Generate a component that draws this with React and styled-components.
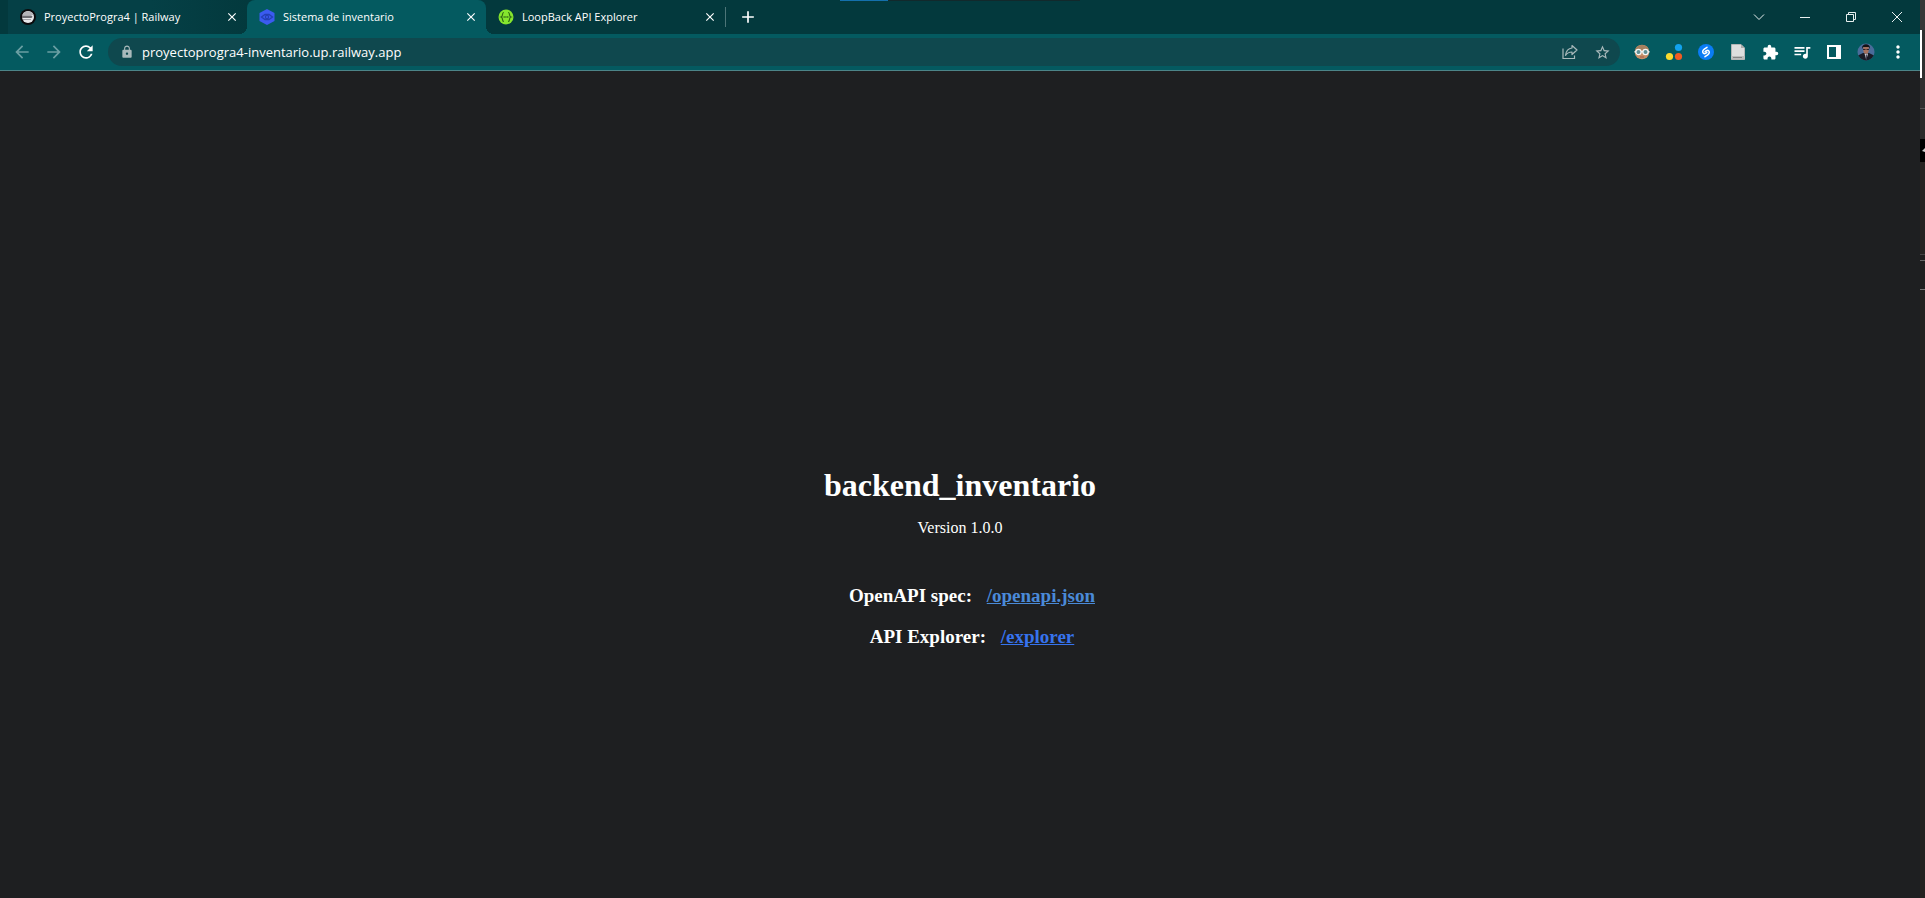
import React from "react";
import styled, { createGlobalStyle, css } from "styled-components";
import {
  MdAdd,
  MdArrowBack,
  MdArrowForward,
  MdClose,
  MdExtension,
  MdLock,
  MdMoreVert,
  MdQueueMusic,
  MdRefresh,
  MdStarBorder,
} from "react-icons/md";

const color = {
  strip: "#03393d",
  idleTab: "#054046",
  toolbar: "#045a60",
  field: "#0f484e",
  page: "#1e1f21",
  muted: "#6a9fa3",
  soft: "#a9b9bb",
};

const GlobalStyle = createGlobalStyle`
  * { box-sizing: border-box; }
  html, body, #root { height: 100%; }
  body { margin: 0; background: ${color.page}; color: #fff; overflow: hidden; }
  button { border: 0; padding: 0; background: none; color: inherit; font: inherit; }
`;

const Desktop = styled.div`
  display: flex;
  height: 100%;
`;

const Browser = styled.div`
  position: relative;
  flex: 1;
  min-width: 0;
  display: flex;
  flex-direction: column;
  font-family: "Open Sans", "Noto Sans", sans-serif;
`;

const TopEdge = styled.div`
  position: absolute;
  top: 0;
  left: 840px;
  width: 240px;
  height: 1px;
  background: linear-gradient(90deg, #1470ac 20%, #12292c 20%);
`;

const TabStrip = styled.header`
  display: flex;
  align-items: center;
  height: 34px;
  padding-left: 8px;
  background: ${color.strip};
`;

const TabList = styled.div`
  display: flex;
  height: 100%;
`;

const activeTab = css`
  background: ${color.toolbar};
  border-radius: 8px 8px 0 0;
  &::before,
  &::after {
    content: "";
    position: absolute;
    bottom: 0;
    width: 8px;
    height: 8px;
  }
  &::before {
    right: 100%;
    background: radial-gradient(circle at 0 0, transparent 8px, ${color.toolbar} 8px);
  }
  &::after {
    left: 100%;
    background: radial-gradient(circle at 100% 0, transparent 8px, ${color.toolbar} 8px);
  }
`;

const Tab = styled.div`
  position: relative;
  display: flex;
  align-items: center;
  width: 239px;
  padding: 0 7px 0 12px;
  background: ${(p) =>
    p.$tinted ? `linear-gradient(90deg, ${color.idleTab} 60%, ${color.strip})` : "transparent"};
  ${(p) => p.$active && activeTab}
`;

const TabLabel = styled.button`
  display: flex;
  align-items: center;
  flex: 1;
  gap: 8px;
  height: 100%;
  font-size: 11px;
  line-height: 16px;
  text-align: left;
  white-space: nowrap;
  svg { flex: none; }
`;

const CloseTab = styled.button`
  display: grid;
  place-items: center;
  width: 16px;
  height: 16px;
  font-size: 14px;
`;

const TabDivider = styled.span`
  width: 1px;
  height: 20px;
  background: #4d7578;
`;

const NewTab = styled.button`
  display: grid;
  place-items: center;
  width: 28px;
  height: 28px;
  margin-left: 8px;
  font-size: 20px;
`;

const WindowControls = styled.div`
  display: flex;
  margin-left: auto;
  height: 28px;
`;

const WindowButton = styled.button`
  display: grid;
  place-items: center;
  width: 46px;
  svg { fill: none; stroke: #e8f0f0; }
`;

const Toolbar = styled.nav`
  display: flex;
  align-items: center;
  height: 37px;
  padding: 0 6px;
  background: ${color.toolbar};
  border-bottom: 1px solid #4c8488;
`;

const ToolButton = styled.button`
  display: grid;
  place-items: center;
  flex: none;
  width: 32px;
  height: 28px;
  font-size: ${(p) => p.$size || 20}px;
  color: ${(p) => p.$tone || "#fff"};
`;

const AddressBar = styled.form`
  display: flex;
  align-items: center;
  flex: 1;
  height: 28px;
  margin: 0 6px;
  padding: 0 2px 0 12px;
  border-radius: 14px;
  background: ${color.field};
  color: ${color.soft};
`;

const Address = styled.input`
  flex: 1;
  min-width: 0;
  margin-left: 8px;
  padding: 0;
  border: 0;
  outline: 0;
  background: none;
  color: #fff;
  font: 13px/20px "Open Sans", "Noto Sans", sans-serif;
`;

const Page = styled.main`
  flex: 1;
  padding-top: 396px;
  background: ${color.page};
  font-family: "Liberation Serif", "Times New Roman", serif;
  text-align: center;
`;

const Title = styled.h1`
  margin: 0 0 15px;
  font-size: 32px;
  line-height: 36px;
`;

const Version = styled.p`
  margin: 0 0 47px;
  font-size: 16px;
  line-height: 20px;
`;

const Entry = styled.h3`
  margin: 0 0 19px;
  padding-left: 24px;
  font-size: 19px;
  line-height: 22px;
`;

const EntryLink = styled.a`
  margin-left: 10px;
  color: ${(p) => p.$tone};
`;

const Neighbour = styled.aside`
  display: flex;
  flex-direction: column;
  width: 5px;
  background: #242220;
`;

const Strip = styled.div`
  height: ${(p) => p.$h}px;
  background: ${(p) => p.$bg};
`;

const Marker = styled(Strip)`
  border-left: 2px solid #fff;
`;

const RailwayLogo = () => (
  <svg width="16" height="16" viewBox="0 0 16 16" aria-hidden="true">
    <circle cx="8" cy="8" r="8" fill="#0b0b0d" />
    <circle cx="8" cy="8" r="6" fill="#e8e8ea" />
    <path d="M2.500 6C4 1 12 1 13.500 6z" fill="#b4b4b8" />
    <path d="M2 6.500h8.500c2.500 0 2.500 2.500 0 2.500H2z" fill="#6d6d72" />
    <path d="M3 10.500h8" stroke="#a5a5aa" strokeWidth="1" />
  </svg>
);

const SistemaLogo = () => (
  <svg width="16" height="16" viewBox="0 0 16 16" aria-hidden="true">
    <path d="M8 0l7.500 4v8L8 16 .5 12V4z" fill="#3b5bf0" />
    <path d="M2.500 8L6 5.500h4L13.500 8 10 10.500H6z" fill="none" stroke="#2340b4" strokeWidth="1.300" />
    <circle cx="8" cy="8" r="1.600" fill="none" stroke="#2340b4" strokeWidth="1.200" />
  </svg>
);

const SwaggerLogo = () => (
  <svg width="16" height="16" viewBox="0 0 16 16" aria-hidden="true">
    <circle cx="8" cy="8" r="7.500" fill="#85e52d" />
    <path
      d="M6 3.500c-1.500 0-1.500.7-1.500 2S4.200 7.600 3 8c1.200.4 1.500 1.200 1.500 2.500s0 2 1.500 2M10 3.500c1.500 0 1.500.7 1.500 2S11.800 7.600 13 8c-1.200.4-1.500 1.200-1.500 2.500s0 2-1.500 2"
      fill="none"
      stroke="#2f6a15"
      strokeWidth="1.200"
    />
    <path d="M5.500 8h5" stroke="#2f6a15" strokeWidth="1.400" strokeDasharray="1.300 .5" />
  </svg>
);

const ShareIcon = () => (
  <svg width="18" height="18" viewBox="0 0 18 18" fill="none" stroke="currentColor" strokeWidth="1.200" aria-hidden="true">
    <path d="M2 5.500v10h11.500v-3" />
    <path d="M11 2.500l5 4.500-5 4.500V9c-3 0-5 1-6.500 3.300C5 8.500 7 5.500 11 5z" strokeLinejoin="round" />
  </svg>
);

const GogglesIcon = () => (
  <svg width="16" height="16" viewBox="0 0 16 16" aria-hidden="true">
    <circle cx="8" cy="8" r="7.300" fill="#c58f68" />
    <path d="M1.500 5C3 -.5 13 -.5 14.500 5L8 6z" fill="#a3805f" />
    <path d="M.5 7h15v1.500H.5z" fill="#e4ecec" />
    <circle cx="4.500" cy="8" r="2.600" fill="#5f8f94" stroke="#f4f8f8" strokeWidth="1.200" />
    <circle cx="11.500" cy="8" r="2.600" fill="#5f8f94" stroke="#f4f8f8" strokeWidth="1.200" />
    <path d="M6 13h4" stroke="#a05c4a" />
  </svg>
);

const DotsIcon = () => (
  <svg width="18" height="18" viewBox="0 0 18 18" aria-hidden="true">
    <circle cx="13.500" cy="4.500" r="3.600" fill="#12a3ee" />
    <circle cx="4.500" cy="13.500" r="3.600" fill="#fadb2f" />
    <circle cx="13.500" cy="13.500" r="3.600" fill="#f35b22" />
  </svg>
);

const ShazamIcon = () => (
  <svg width="16" height="16" viewBox="0 0 16 16" aria-hidden="true">
    <circle cx="8" cy="8" r="8" fill="#0a7cf5" />
    <path
      d="M9 3.300L6.300 5.200C4.500 6.500 4.300 8 5.200 9c.8.900 1.900.7 2.700.1l1-.8M7 12.700l2.700-1.900c1.800-1.300 2-2.800 1.100-3.800-.8-.9-1.900-.7-2.700-.1l-1 .8"
      fill="none"
      stroke="#fff"
      strokeWidth="1.500"
      strokeLinecap="round"
    />
  </svg>
);

const PaperIcon = () => (
  <svg width="16" height="16" viewBox="0 0 16 16" aria-hidden="true">
    <path d="M1.500.5h9.500l3.500 3.500v11.500h-13z" fill="#dedede" stroke="#b5b5b5" />
    <path d="M11 .5V4h3.500z" fill="#aaa" />
    <path d="M1 12h14v3H1z" fill="#bdbdbd" />
    <path d="M3 13.500h9" stroke="#858585" />
  </svg>
);

const SidePanelIcon = () => (
  <svg width="16" height="16" viewBox="0 0 16 16" aria-hidden="true">
    <path d="M1 1h14v14H1zM3 3v10h7V3z" fill="#fff" fillRule="evenodd" />
  </svg>
);

const Avatar = () => (
  <svg width="18" height="18" viewBox="0 0 18 18" aria-hidden="true">
    <clipPath id="avatar-edge"><circle cx="9" cy="9" r="8.500" /></clipPath>
    <g clipPath="url(#avatar-edge)">
      <path d="M0 0h18v18H0z" fill="#4a6c9a" />
      <path d="M0 18v-5l6-3h6l6 3v5z" fill="#191a25" />
      <path d="M7.500 10.500h3.500L9.300 17z" fill="#d4d8e5" />
      <path d="M9.300 11.500v6" stroke="#2a2436" />
      <ellipse cx="9" cy="6.500" rx="2.800" ry="4.200" fill="#a5705d" />
      <path d="M5 6C4 -.5 14 -.5 13 6l-1-2H6z" fill="#151215" />
      <path d="M6 6.500h2.500M9.500 6.500H12" stroke="#30242a" />
    </g>
  </svg>
);

const tabs = [
  { title: "ProyectoProgra4 | Railway", Icon: RailwayLogo, tinted: true },
  { title: "Sistema de inventario", Icon: SistemaLogo, active: true },
  { title: "LoopBack API Explorer", Icon: SwaggerLogo },
];

const windowControls = [
  { label: "Buscar pestañas", d: "M1 3.500l5 5 5-5" },
  { label: "Minimizar", d: "M1 6.500h10" },
  { label: "Restaurar", d: "M1.500 3.500h7v7h-7zM3.500 3.500v-2h7v7h-2" },
  { label: "Cerrar", d: "M1 1l10 10M11 1L1 11" },
];

const tools = [
  { label: "Perfil con gafas", Icon: GogglesIcon },
  { label: "Puntos de color", Icon: DotsIcon },
  { label: "Shazam", Icon: ShazamIcon },
  { label: "Documento", Icon: PaperIcon },
  { label: "Extensiones", Icon: MdExtension, size: 17 },
  { label: "Control multimedia", Icon: MdQueueMusic },
  { label: "Panel lateral", Icon: SidePanelIcon },
  { label: "Perfil", Icon: Avatar },
  { label: "Menú", Icon: MdMoreVert },
];

export default function App() {
  return (
    <Desktop>
      <GlobalStyle />
      <Browser>
        <TabStrip>
          <TabList>
            {tabs.map(({ title, Icon, active, tinted }) => (
              <Tab key={title} $active={active} $tinted={tinted}>
                <TabLabel type="button" aria-pressed={!!active}>
                  <Icon />
                  {title}
                </TabLabel>
                <CloseTab type="button" aria-label={`Cerrar ${title}`}>
                  <MdClose />
                </CloseTab>
              </Tab>
            ))}
          </TabList>
          <TabDivider />
          <NewTab type="button" aria-label="Nueva pestaña">
            <MdAdd />
          </NewTab>
          <WindowControls>
            {windowControls.map(({ label, d }) => (
              <WindowButton key={label} type="button" aria-label={label}>
                <svg width="12" height="12" viewBox="0 0 12 12">
                  <path d={d} />
                </svg>
              </WindowButton>
            ))}
          </WindowControls>
        </TabStrip>
        <Toolbar>
          <ToolButton type="button" aria-label="Atrás" $tone={color.muted}>
            <MdArrowBack />
          </ToolButton>
          <ToolButton type="button" aria-label="Adelante" $tone={color.muted}>
            <MdArrowForward />
          </ToolButton>
          <ToolButton type="button" aria-label="Recargar">
            <MdRefresh />
          </ToolButton>
          <AddressBar onSubmit={(e) => e.preventDefault()}>
            <MdLock size={14} />
            <Address aria-label="Dirección" defaultValue="proyectoprogra4-inventario.up.railway.app" />
            <ToolButton type="button" aria-label="Compartir" $tone={color.soft}>
              <ShareIcon />
            </ToolButton>
            <ToolButton type="button" aria-label="Favorito" $tone={color.soft} $size={17}>
              <MdStarBorder />
            </ToolButton>
          </AddressBar>
          {tools.map(({ label, Icon, size }) => (
            <ToolButton key={label} type="button" aria-label={label} $size={size}>
              <Icon />
            </ToolButton>
          ))}
        </Toolbar>
        <Page>
          <Title>backend_inventario</Title>
          <Version>Version 1.0.0</Version>
          <Entry>
            OpenAPI spec: <EntryLink href="/openapi.json" $tone="#4a8ad8">/openapi.json</EntryLink>
          </Entry>
          <Entry>
            API Explorer: <EntryLink href="/explorer" $tone="#3673ee">/explorer</EntryLink>
          </Entry>
        </Page>
        <TopEdge />
      </Browser>
      <Neighbour aria-hidden="true">
        <Strip $h={30} $bg="#363636" />
        <Marker $h={48} $bg="#303030" />
        <Strip $h={30} $bg="#303030" />
        <Strip $h={1} $bg="#555" />
        <Strip $h={30} $bg="#2b2b2a" />
        <Strip $h={23} $bg="#000">
          <svg width="5" height="23" viewBox="0 0 5 23">
            <path d="M5 9l-3 3 3 1z" fill="#ccc" />
          </svg>
        </Strip>
        <Strip $h={92} $bg="#262422" />
        <Strip $h={1} $bg="#444" />
        <Strip $h={5} $bg="#1f1e1e" />
        <Strip $h={1} $bg="#666" />
        <Strip $h={28} $bg="#1f1f1f" />
        <Strip $h={1} $bg="#777" />
      </Neighbour>
    </Desktop>
  );
}
